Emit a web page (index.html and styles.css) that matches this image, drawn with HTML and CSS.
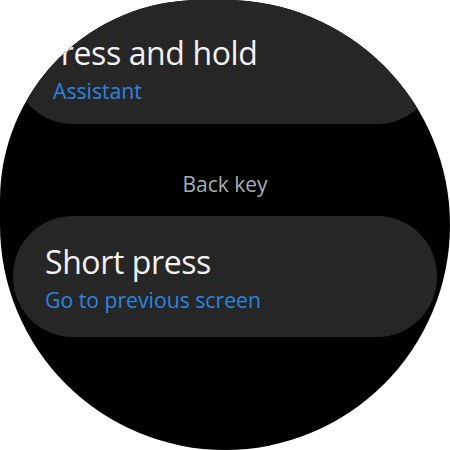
FILE: index.html
```html
<!DOCTYPE html>
<html lang="en">
<head>
    <meta charset="UTF-8">
    <meta name="viewport" content="width=device-width, initial-scale=1.0">
    <title>Side key</title>
    <link rel="stylesheet" href="styles.css">
</head>
<body>
    <div class="watch">
        <div class="screen">
            <div class="item item-top">
                <div class="item-title scrolled">Press and hold</div>
                <div class="item-sub">Assistant</div>
            </div>

            <div class="section-title">Back key</div>

            <div class="item">
                <div class="item-title">Short press</div>
                <div class="item-sub">Go to previous screen</div>
            </div>
        </div>
    </div>
</body>
</html>
```

FILE: styles.css
```css
body {
    margin: 0;
    padding: 0;
    background: #fff;
    font-family: "Open Sans", "Noto Sans", sans-serif;
}

.watch {
    width: 450px;
    height: 450px;
    background: #000;
    border-radius: 200px 225px 225px 225px;
    overflow: hidden;
}

.screen {
    display: flex;
    flex-direction: column;
}

.item {
    margin: 0 13px;
    height: 121px;
    box-sizing: border-box;
    padding: 26px 30px 0 32px;
    background: #262626;
    border-radius: 60px;
    display: flex;
    flex-direction: column;
}

.item-top {
    height: 124px;
    padding-top: 33px;
    padding-left: 40px;
}

.item-title {
    color: #f2f2f2;
    font-size: 32px;
    line-height: 40px;
    letter-spacing: -0.4px;
    white-space: nowrap;
}

/* long titles scroll sideways */
.item-title.scrolled {
    margin-left: -11px;
}

.item-sub {
    color: #2a85e0;
    font-size: 21.2px;
    line-height: 35px;
    white-space: nowrap;
}

.section-title {
    padding: 45px 0 17px;
    text-align: center;
    color: #a9adb2;
    font-size: 21px;
    line-height: 30px;
}
```
